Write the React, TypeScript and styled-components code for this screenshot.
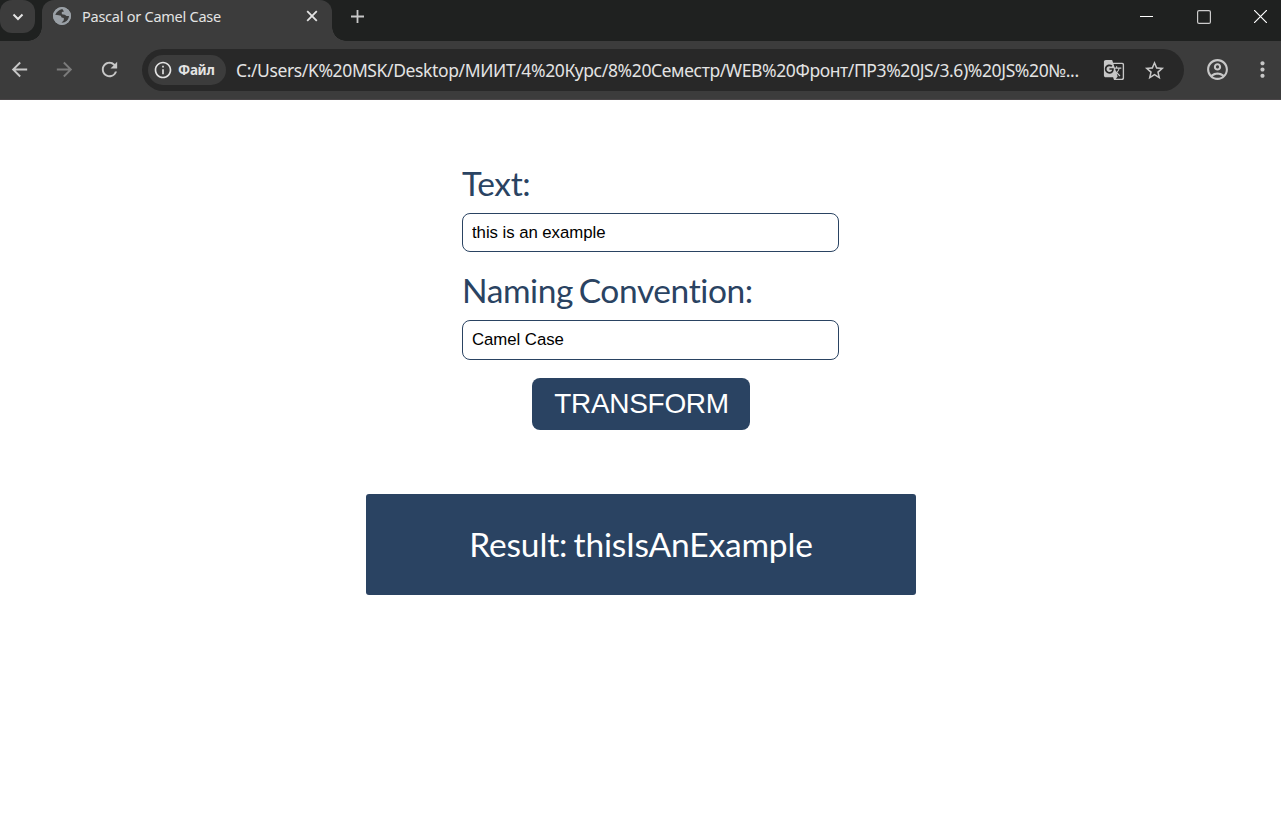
import React from 'react';
import styled, { createGlobalStyle } from 'styled-components';
import { MdGTranslate, MdStarBorder, MdOutlineAccountCircle, MdInfoOutline, MdArrowBack, MdArrowForward, MdRefresh, MdMoreVert } from 'react-icons/md';

const GlobalStyle = createGlobalStyle`
  * { box-sizing: border-box; }
  body { margin: 0; background: #fff; overflow: hidden; }
`;

const Window = styled.div`
  width: 1281px;
  height: 825px;
  display: flex;
  flex-direction: column;
  font-family: "Noto Sans", "Open Sans", sans-serif;
`;

const TabStrip = styled.header`
  display: flex;
  height: 41px;
  background: #1f2120;
  color: #e3e3e3;
`;

const TabSearch = styled.div`
  width: 35px;
  height: 33px;
  margin-right: 7px;
  border-radius: 12px;
  background: #3c3c3c;
  display: flex;
  align-items: center;
  justify-content: center;
`;

const Tab = styled.div`
  position: relative;
  width: 290px;
  height: 41px;
  padding: 0 12px 9px 10px;
  border-radius: 12px 12px 0 0;
  background: #3c3c3c;
  display: flex;
  align-items: center;
  &::before, &::after {
    content: '';
    position: absolute;
    bottom: 0;
    width: 14px;
    height: 14px;
  }
  &::before {
    left: -14px;
    background: radial-gradient(circle at 0 0, transparent 13.5px, #3c3c3c 14px);
  }
  &::after {
    right: -14px;
    background: radial-gradient(circle at 100% 0, transparent 13.5px, #3c3c3c 14px);
  }
`;

const TabTitle = styled.span`
  flex: 1;
  margin-left: 10px;
  font-size: 14.5px;
  letter-spacing: -0.25px;
  white-space: nowrap;
`;

const NewTab = styled.div`
  display: flex;
  align-items: center;
  height: 32px;
  margin-left: 19px;
`;

const WindowControls = styled.div`
  display: flex;
  align-items: center;
  gap: 43.5px;
  height: 33px;
  margin-left: auto;
  padding-right: 14px;
`;

const Toolbar = styled.nav`
  display: flex;
  align-items: center;
  height: 59px;
  padding: 0 5px 1px 8px;
  background: #3c3c3c;
  border-bottom: 1px solid #4a4648;
  color: #c7c7c7;
`;

const NavIcons = styled.div`
  display: flex;
  align-items: center;
  flex: none;
  gap: 22px;
  width: 134px;
  svg { display: block; flex: none; }
`;

const AddressBar = styled.div`
  display: flex;
  align-items: center;
  flex: none;
  width: 1042px;
  height: 42px;
  padding: 0 17px 0 6px;
  border-radius: 21px;
  background: #282828;
  color: #e3e3e3;
`;

const SchemeChip = styled.div`
  display: flex;
  align-items: center;
  flex: none;
  gap: 5px;
  width: 78px;
  height: 30px;
  padding-left: 5px;
  border-radius: 15px;
  background: #3c3c3c;
  font-size: 13.5px;
  font-weight: 700;
  letter-spacing: -0.3px;
  svg { flex: none; }
`;

const Url = styled.span`
  flex: none;
  width: 867px;
  margin-left: 10px;
  padding-top: 1px;
  font-size: 17.5px;
  letter-spacing: -0.38px;
  white-space: nowrap;
`;

const BarIcons = styled.div`
  display: flex;
  align-items: center;
  gap: 18px;
  padding-top: 1px;
  color: #c7c7c7;
  svg { flex: none; }
`;

const ProfileIcons = styled.div`
  display: flex;
  align-items: center;
  gap: 20px;
  margin-left: 21px;
  svg { flex: none; }
`;

const Page = styled.main`
  flex: 1;
  display: flex;
  flex-direction: column;
  align-items: center;
  padding-top: 64px;
  background: #fff;
`;

const Form = styled.form`
  display: flex;
  flex-direction: column;
  width: 377px;
  margin-left: 20px;
`;

const Label = styled.label`
  height: 49px;
  font: 33.5px/38px Lato, sans-serif;
  font-variant-ligatures: none;
  letter-spacing: -0.4px;
  word-spacing: -2.5px;
  color: #2a4362;
  white-space: nowrap;
`;

const Field = styled.input<{ $height: number; $gap: number }>`
  height: ${p => p.$height}px;
  margin-bottom: ${p => p.$gap}px;
  padding: 0 9px;
  border: 1px solid #2a4362;
  border-radius: 8px;
  outline: none;
  background: #fff;
  color: #000;
  font: 16.8px "Liberation Sans", Arial, sans-serif;
  letter-spacing: -0.05px;
`;

const Submit = styled.button`
  width: 218px;
  height: 52px;
  padding: 0 0 0 2px;
  border: 0;
  border-radius: 8px;
  background: #2a4362;
  color: #fff;
  font: 28px "Liberation Sans", Arial, sans-serif;
  letter-spacing: -0.3px;
`;

const Result = styled.section`
  display: flex;
  align-items: center;
  justify-content: center;
  width: 550px;
  height: 101px;
  margin-top: 64px;
  padding: 0 0 2px 1px;
  border-radius: 3px;
  background: #2a4362;
  color: #fff;
  font: 33.5px/40px Lato, sans-serif;
  font-variant-ligatures: none;
  letter-spacing: -0.16px;
  word-spacing: -2px;
`;

const Globe = () => (
  <svg width="20" height="20" viewBox="0 0 20 20">
    <circle cx="10" cy="10" r="9" fill="#9aa0a6" />
    <path d="M10.3 3C7 4 5 5.500 3.200 8.700L6.800 9.300Q9.400 9.300 9.600 11.400L11.800 12.100V14.200L9.500 16.800C14 16.500 16.800 13.700 17 10H14.500L12.800 8.700L9.800 8.300V6.100L12 5.500Z" fill="#3c3c3c" />
    <circle cx="10" cy="10" r="8.200" fill="none" stroke="#9aa0a6" strokeWidth="1.600" />
  </svg>
);

export default function App() {
  return (
    <Window>
      <GlobalStyle />
      <TabStrip>
        <TabSearch>
          <svg width="12" height="8" viewBox="0 0 12 8" fill="none" stroke="#e3e3e3" strokeWidth="2"><path d="M1.500 1.500L6 6L10.500 1.500" /></svg>
        </TabSearch>
        <Tab>
          <Globe />
          <TabTitle>Pascal or Camel Case</TabTitle>
          <svg width="16" height="12" viewBox="0 0 16 12" stroke="#e3e3e3" strokeWidth="1.800"><path d="M3.200 1.200L12.800 10.800M12.800 1.200L3.200 10.800" /></svg>
        </Tab>
        <NewTab>
          <svg width="13" height="13" viewBox="0 0 13 13" stroke="#c7c7c7" strokeWidth="1.800"><path d="M6.500 0V13M0 6.500H13" /></svg>
        </NewTab>
        <WindowControls>
          <svg width="13" height="13" viewBox="0 0 13 13" stroke="#fff"><path d="M0 6.500H13" /></svg>
          <svg width="14" height="14" viewBox="0 0 14 14" fill="none" stroke="#ccc" strokeWidth="1.200"><rect x=".6" y=".6" width="12.800" height="12.800" rx="1.500" /></svg>
          <svg width="13" height="13" viewBox="0 0 13 13" stroke="#fff" strokeWidth="1.200"><path d="M0 0L13 13M13 0L0 13" /></svg>
        </WindowControls>
      </TabStrip>
      <Toolbar>
        <NavIcons>
          <MdArrowBack size={23} />
          <MdArrowForward size={23} color="#7b7b7b" />
          <MdRefresh size={23} />
        </NavIcons>
        <AddressBar>
          <SchemeChip><MdInfoOutline size={20} />Файл</SchemeChip>
          <Url>C:/Users/K%20MSK/Desktop/МИИТ/4%20Курс/8%20Семестр/WEB%20Фронт/ПР3%20JS/3.6)%20JS%20№...</Url>
          <BarIcons>
            <MdGTranslate size={22} />
            <MdStarBorder size={23} />
          </BarIcons>
        </AddressBar>
        <ProfileIcons>
          <MdOutlineAccountCircle size={25} />
          <MdMoreVert size={25} />
        </ProfileIcons>
      </Toolbar>
      <Page>
        <Form onSubmit={e => e.preventDefault()}>
          <Label htmlFor="text">Text:</Label>
          <Field id="text" $height={39} $gap={19} defaultValue="this is an example" />
          <Label htmlFor="convention">Naming Convention:</Label>
          <Field id="convention" $height={40} $gap={18} defaultValue="Camel Case" />
        </Form>
        <Submit type="button">TRANSFORM</Submit>
        <Result>Result: thisIsAnExample</Result>
      </Page>
    </Window>
  );
}
